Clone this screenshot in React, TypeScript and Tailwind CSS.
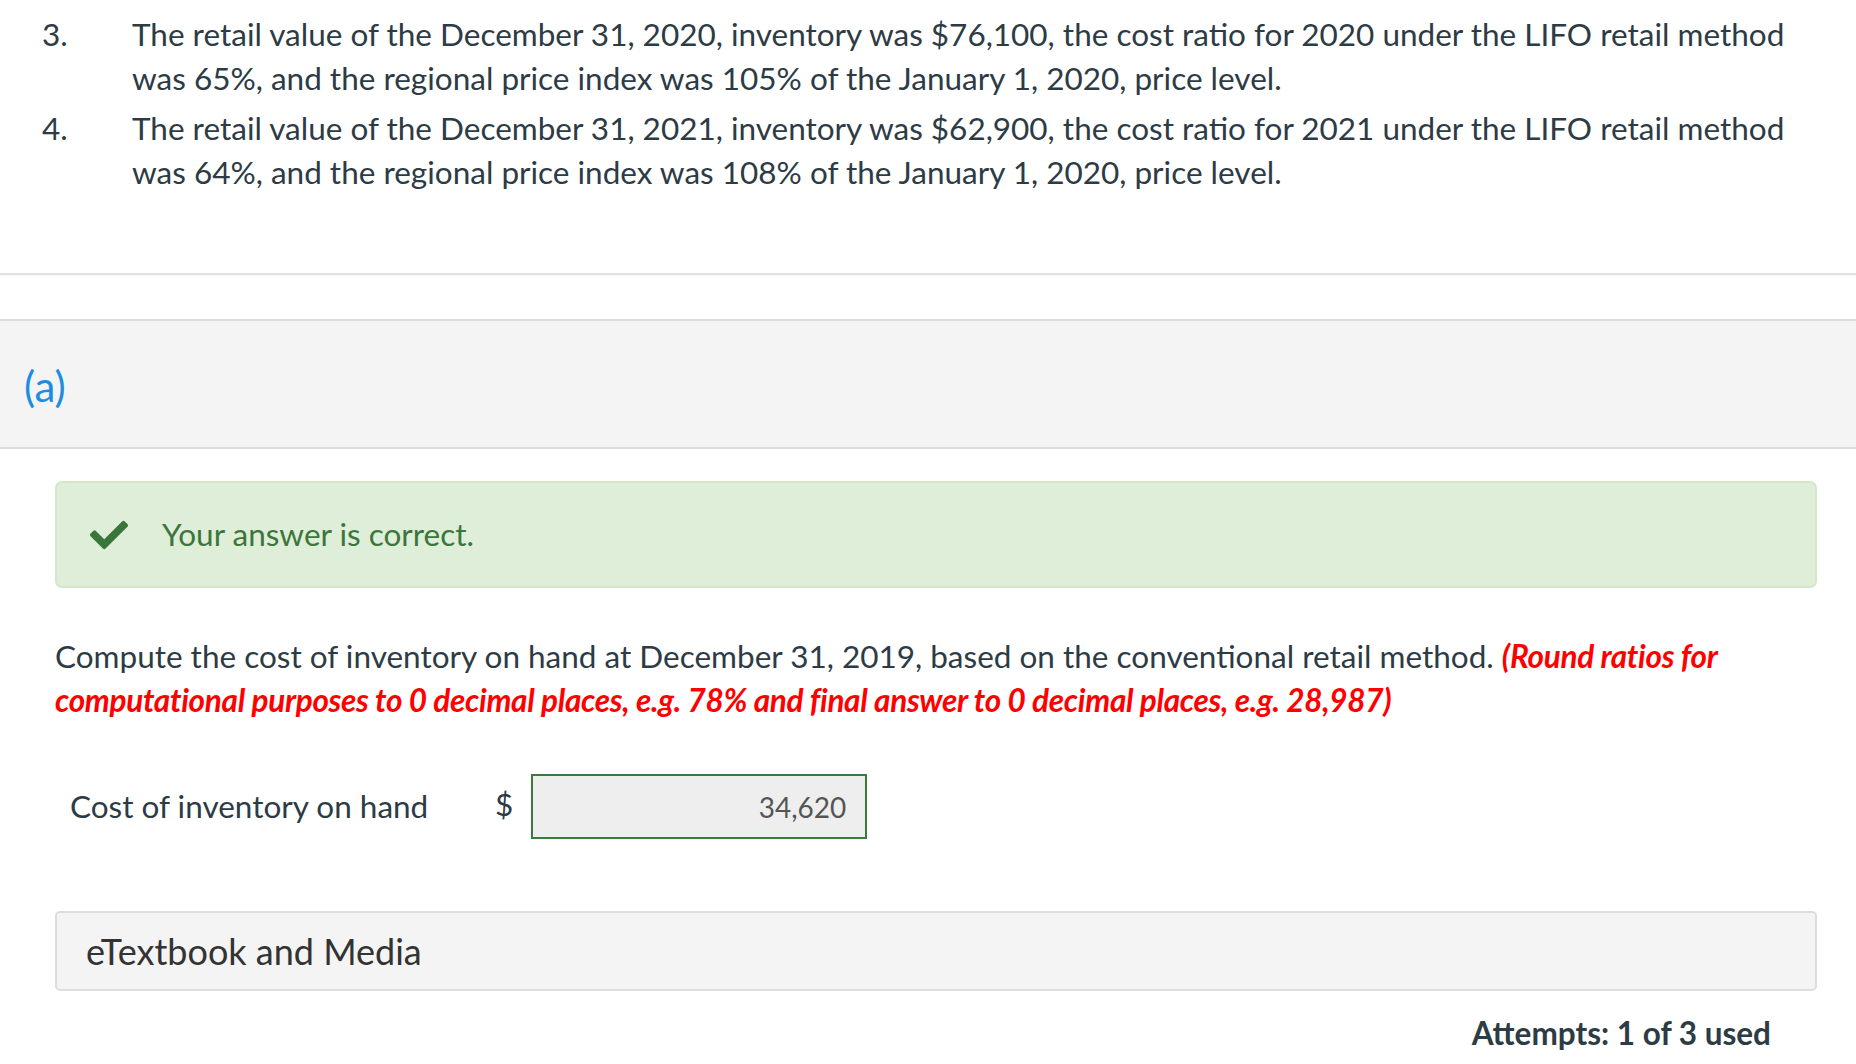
import React from "react";
import { FaCheck } from "react-icons/fa";

export default function App() {
  return (
    <div
      className="w-[1856px] min-h-[1064px] bg-white text-[#2d3b45] overflow-hidden"
      style={{ fontFamily: "Lato, 'Noto Sans', sans-serif" }}
    >
      {/* question list */}
      <div className="border-b-2 border-[#e2e2e2] pt-[12px] pb-[79px] shadow-[0_1px_2px_rgba(0,0,0,0.05)]">
        <div className="flex text-[31.5px] leading-[44px]">
          <div className="w-[132px] pl-[42px] shrink-0">3.</div>
          <div className="w-[1685px]">
            The retail value of the December 31, 2020, inventory was $76,100, the cost ratio for 2020 under the LIFO retail method was 65%, and the regional price index was 105% of the January 1, 2020, price level.
          </div>
        </div>
        <div className="flex text-[31.5px] leading-[44px] mt-[6px]">
          <div className="w-[132px] pl-[42px] shrink-0">4.</div>
          <div className="w-[1685px]">
            The retail value of the December 31, 2021, inventory was $62,900, the cost ratio for 2021 under the LIFO retail method was 64%, and the regional price index was 108% of the January 1, 2020, price level.
          </div>
        </div>
      </div>

      {/* part header */}
      <div className="mt-[44px] h-[130px] bg-[#f4f4f4] border-y-2 border-[#dcdcdc] flex items-center pl-[24px]">
        <span className="text-[42px] text-[#1e8de0] leading-none mt-[4px]">(a)</span>
      </div>

      <div className="ml-[55px] mr-[39px]">
        {/* alert */}
        <div className="mt-[32px] h-[107px] rounded-[7px] border-2 border-[#d3e8c9] bg-[#dfeed8] flex items-center">
          <FaCheck className="ml-[33px] text-[#3a753a]" size={38} />
          <span className="ml-[34px] text-[31.5px] text-[#3c763d]">Your answer is correct.</span>
        </div>

        {/* prompt */}
        <p className="mt-[46px] text-[31.5px] leading-[44px] w-[1762px]">
          Compute the cost of inventory on hand at December 31, 2019, based on the conventional retail method.{" "}
          <span className="text-[#ff0000] font-bold italic tracking-[-0.3px]">
            (Round ratios for computational purposes to 0 decimal places, e.g. 78% and final answer to 0 decimal places, e.g. 28,987)
          </span>
        </p>

        {/* answer row */}
        <div className="mt-[52px] flex items-center">
          <span className="ml-[15px] w-[425px] text-[31.5px] leading-none">Cost of inventory on hand</span>
          <span className="text-[31.5px] leading-none mb-[4px]">$</span>
          <div className="ml-[18px] w-[336px] h-[65px] border-2 border-[#3b7a3b] bg-[#eeeeee] flex items-center justify-end pr-[19px] text-[28px] text-[#555555]">
            34,620
          </div>
        </div>

        {/* etextbook */}
        <div className="mt-[72px] h-[80px] rounded-[5px] border-2 border-[#dddddd] bg-[#f4f4f4] flex items-center pl-[29px]">
          <span className="text-[36px] text-[#333333]">eTextbook and Media</span>
        </div>

        <div className="flex justify-end pr-[46px] mt-[22px]">
          <span className="text-[31.5px] font-bold leading-[40px]">Attempts: 1 of 3 used</span>
        </div>
      </div>
    </div>
  );
}
